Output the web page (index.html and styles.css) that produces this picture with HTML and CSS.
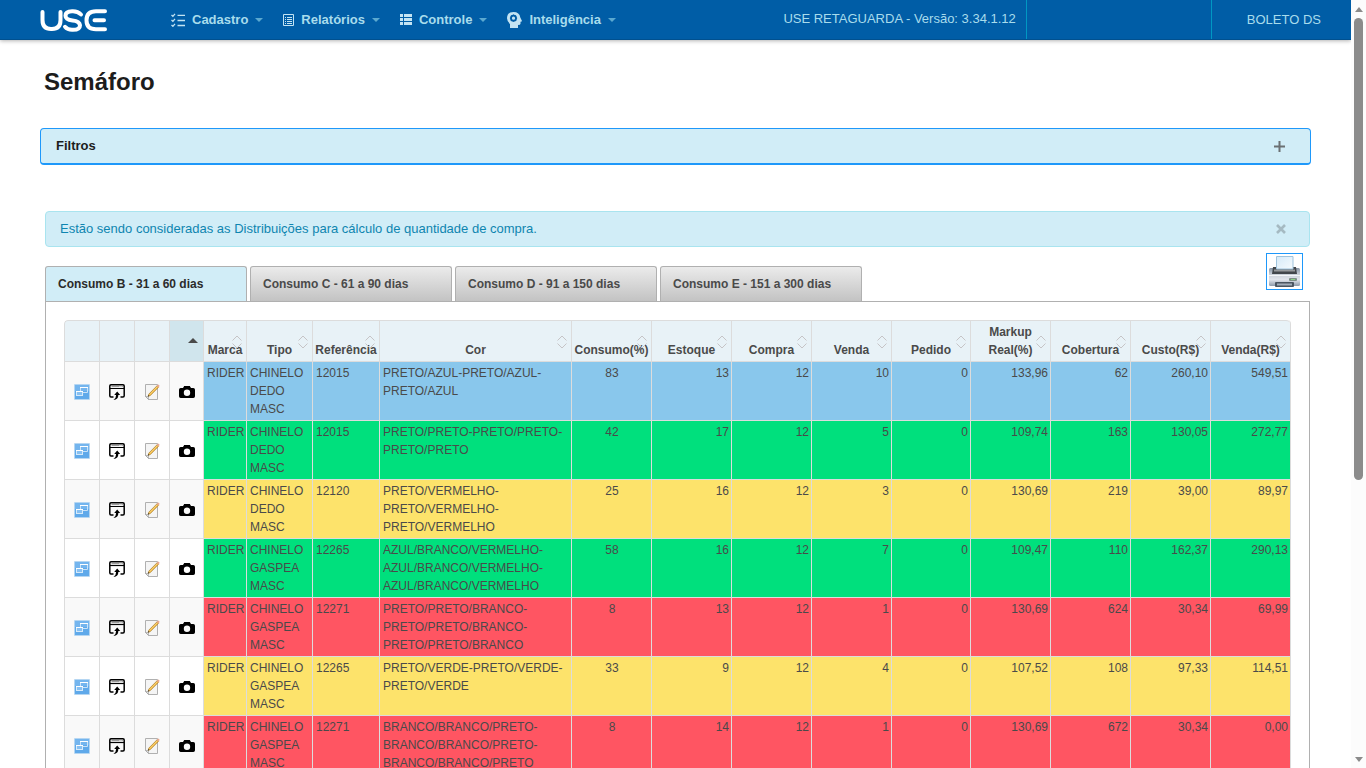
FILE: index.html
```
<!DOCTYPE html>
<html lang="pt-BR">
<head>
<meta charset="utf-8">
<title>Semáforo</title>
<link rel="stylesheet" href="styles.css">
</head>
<body>
<svg class="sprite" aria-hidden="true">
  <symbol id="i-windows" viewBox="0 0 16 16">
    <rect x="0" y="0" width="16" height="16" rx="1" fill="#b5d6f2"/>
    <rect x="1" y="1" width="14" height="14" fill="#5fa9ea"/>
    <rect x="1" y="1" width="14" height="6" fill="#74b5ee"/>
    <path d="M6.500 8V3.500h7v5H9" fill="none" stroke="#c9e2f8"/>
    <path d="M6 3.500h8" stroke="#fff"/>
    <rect x="2.500" y="7.500" width="6" height="4" fill="#86c0f2" stroke="#d6eafa"/>
    <path d="M2 7.500h7" stroke="#fff"/>
  </symbol>
  <symbol id="i-share" viewBox="0 0 16 16">
    <path d="M4.500 13H2q-1.200 0-1.200-1.200V2Q.8.800 2 .8h12q1.200 0 1.200 1.200v9.800q0 1.200-1.200 1.200h-2.500" fill="none" stroke="#000" stroke-width="1.500"/>
    <path d="M1 4.500h14" stroke="#000" stroke-width="1.200"/>
    <path d="M2.500 2.600h8M11.500 2.600h1M13.200 2.600h.8" stroke="#777" stroke-width=".8"/>
    <path d="M8.200 7.500l3 3.500H9.300q.2 4.300-4.800 5 2.700-1.800 2.600-5H5.200z" fill="#000"/>
  </symbol>
  <symbol id="i-edit" viewBox="0 0 16 16">
    <path d="M1.500.5h12v15h-9l-3-3z" fill="#f5f5f5" stroke="#b0b0b0"/>
    <path d="M1.500 12.500h3v3z" fill="#ddd" stroke="#999" stroke-width=".6"/>
    <path d="M4.200 12.300l.6-2.200 8.300-8.400 1.500 1.500-8.300 8.400z" fill="#f2b63a" stroke="#9c7327" stroke-width=".6"/>
    <path d="M5.600 10.700l7.800-8" stroke="#ffe9a8" stroke-width=".6"/>
    <path d="M12.700 2l1.300-1.400q1.300.1 1.600 1.500l-1.300 1.400z" fill="#eaa98f"/>
    <path d="M4 12.600l.5-1.500.9.900z" fill="#222"/>
  </symbol>
  <symbol id="i-camera" viewBox="0 0 16 12">
    <path fill-rule="evenodd" d="M5.200 0h5.600l1.200 2h2.300Q16 2 16 3.700v6.600Q16 12 14.300 12H1.700Q0 12 0 10.300V3.700Q0 2 1.700 2H4zM8 3.500a3.200 3.200 0 1 0 0 6.400 3.200 3.200 0 0 0 0-6.400z" fill="#000"/>
  </symbol>
  <symbol id="i-sort" viewBox="0 0 10 14">
    <path d="M.5 5.500L5 1l4.500 4.500M.5 8.500L5 13l4.500-4.500" fill="none" stroke="#c6c4c6"/>
  </symbol>
</svg>

<div class="shell">
  <div class="page">
    <header class="topbar">
      <a class="logo" href="#" aria-label="USE">
        <svg width="68" height="24" viewBox="0 0 68 24" fill="none" stroke="#fff" stroke-width="4" stroke-linecap="round" stroke-linejoin="round">
          <path d="M2.500 3v8q0 9 8.500 9h1q8.500 0 8.500-9V3"/>
          <path d="M41 5.500Q38 2.300 33 2.300h-1q-6.500 0-6.500 4.500 0 4 7 4.600t7.500 4.800q0 4.600-7 4.600h-1q-4.500 0-7-3"/>
          <path d="M65 2.300H56q-9.500 0-9.500 9t9.500 9h9M54.500 11.300H64"/>
        </svg>
      </a>
      <nav class="menu">
        <button class="menu-item" type="button"><svg width="14" height="14" viewBox="0 0 14 14" fill="none" stroke="currentColor" stroke-width="1.300"><path d="M.5 2l1.400 1.300L4 .8M.5 7l1.400 1.300L4 5.800M.5 12l1.400 1.300L4 10.800M6.500 2.300H14M6.500 7.500H14M6.500 12.500H14"/></svg>Cadastro<i class="caret"></i></button>
        <button class="menu-item" type="button"><svg width="11" height="12" viewBox="0 0 11 12" fill="none" stroke="currentColor"><path d="M.5.5h10v11H.5zM2 3.500h1M4 3.500h5M2 5.500h1M4 5.500h5M2 7.500h1M4 7.500h5M2 9.500h1M4 9.500h5"/></svg>Relatórios<i class="caret"></i></button>
        <button class="menu-item" type="button"><svg width="12" height="11" viewBox="0 0 12 11" fill="currentColor"><path d="M0 0h3v3H0zM4 0h8v3H4zM0 4h3v3H0zM4 4h8v3H4zM0 8h3v3H0zM4 8h8v3H4z"/></svg>Controle<i class="caret"></i></button>
        <button class="menu-item" type="button"><svg width="15" height="16" viewBox="0 0 15 16"><path d="M6.500 0Q12.500 0 13.300 5.500L15 9q0 .7-1.500.8v2q0 1.200-2.500 1.200V16H3v-4Q0 9.500 0 6.300 0 0 6.500 0z" fill="currentColor"/><circle cx="6.500" cy="6.200" r="2.500" fill="none" stroke="#005da6" stroke-width="1.800"/><path d="M6.500 2.600v1M6.500 8.800v1M2.900 6.200h1M9.100 6.200h1M4 3.700l.7.700M8.300 8l.7.700M9 3.700l-.7.700M4.700 8l-.7.700" stroke="#005da6" stroke-width="1.300"/></svg>Inteligência<i class="caret"></i></button>
      </nav>
      <span class="version">USE RETAGUARDA - Versão: 3.34.1.12</span>
      <span class="slot"></span>
      <a class="account" href="#">BOLETO DS</a>
    </header>

    <main class="content">
      <h1 class="title">Semáforo</h1>

      <button class="filters" type="button">Filtros
        <svg width="11" height="11" viewBox="0 0 11 11"><path d="M5.500 0v11M0 5.500h11" stroke="#6b7073" stroke-width="2"/></svg>
      </button>

      <div class="panel">
        <div class="alert">
          <span>Estão sendo consideradas as Distribuições para cálculo de quantidade de compra.</span>
          <button class="plain" type="button" aria-label="Fechar"><svg width="10" height="10" viewBox="0 0 10 10"><path d="M1 1l8 8M9 1L1 9" stroke="#a5bac2" stroke-width="2.600"/></svg></button>
        </div>

        <div class="tabbar">
          <div class="tabs" role="tablist">
            <button class="tab active" type="button" role="tab" aria-selected="true">Consumo B - 31 a 60 dias</button>
            <button class="tab" type="button" role="tab">Consumo C - 61 a 90 dias</button>
            <button class="tab" type="button" role="tab">Consumo D - 91 a 150 dias</button>
            <button class="tab" type="button" role="tab">Consumo E - 151 a 300 dias</button>
          </div>
          <button class="print" type="button" aria-label="Imprimir">
            <svg width="33" height="33" viewBox="0 0 33 33">
              <defs>
                <linearGradient id="body" x1="0" y1="0" x2="0" y2="1"><stop offset="0" stop-color="#8492a2"/><stop offset=".35" stop-color="#c9cfd8"/><stop offset=".65" stop-color="#e2e5ec"/><stop offset="1" stop-color="#8d99a8"/></linearGradient>
                <linearGradient id="sheet" x1="0" y1="0" x2="1" y2="1"><stop offset="0" stop-color="#d6eaf8"/><stop offset="1" stop-color="#f6fbfe"/></linearGradient>
              </defs>
              <rect x="1" y="13" width="31" height="18" rx="1.500" fill="url(#body)"/>
              <path d="M1 20.500h31" stroke="#f4f6f8"/>
              <path d="M5 12h23l1 7H4z" fill="#42464b"/>
              <path d="M6 15.500h21" stroke="#96999c" stroke-width="2"/>
              <path d="M8.500 1.500h16.500v12.500H8.500z" fill="url(#sheet)" stroke="#9fc3dc"/>
              <rect x="21" y="23" width="8" height="3" rx="1" fill="#7f9088"/>
              <rect x="23" y="24" width="4" height="1" fill="#8fd48a"/>
              <rect x="7" y="27" width="19" height="5" rx="1" fill="#4b5560"/>
              <path d="M9 29.500h15" stroke="#a4adb8" stroke-width="2"/>
            </svg>
          </button>
        </div>

        <div class="tab-body">
          <table class="grid">
            <colgroup>
              <col class="c-icon"><col class="c-icon"><col class="c-icon"><col class="c-cam"><col class="c-brand"><col class="c-type"><col class="c-ref"><col>
              <col class="c-num"><col class="c-num"><col class="c-num"><col class="c-num"><col class="c-order"><col class="c-num"><col class="c-num"><col class="c-num"><col class="c-num">
            </colgroup>
            <thead>
              <tr>
                <th></th><th></th><th></th>
                <th class="sorted"><i class="up"></i></th>
                <th>Marca<svg class="sort"><use href="#i-sort"/></svg></th>
                <th>Tipo<svg class="sort"><use href="#i-sort"/></svg></th>
                <th>Referência<svg class="sort"><use href="#i-sort"/></svg></th>
                <th>Cor<svg class="sort"><use href="#i-sort"/></svg></th>
                <th>Consumo(%)<svg class="sort"><use href="#i-sort"/></svg></th>
                <th>Estoque<svg class="sort"><use href="#i-sort"/></svg></th>
                <th>Compra<svg class="sort"><use href="#i-sort"/></svg></th>
                <th>Venda<svg class="sort"><use href="#i-sort"/></svg></th>
                <th>Pedido<svg class="sort"><use href="#i-sort"/></svg></th>
                <th>Markup Real(%)<svg class="sort"><use href="#i-sort"/></svg></th>
                <th>Cobertura<svg class="sort"><use href="#i-sort"/></svg></th>
                <th>Custo(R$)<svg class="sort"><use href="#i-sort"/></svg></th>
                <th>Venda(R$)<svg class="sort"><use href="#i-sort"/></svg></th>
              </tr>
            </thead>
            <tbody>
              <tr class="blue">
                <td class="act"><button type="button" aria-label="Detalhes"><svg><use href="#i-windows"/></svg></button></td>
                <td class="act"><button type="button" aria-label="Abrir"><svg><use href="#i-share"/></svg></button></td>
                <td class="act"><button type="button" aria-label="Editar"><svg><use href="#i-edit"/></svg></button></td>
                <td class="act"><button type="button" aria-label="Foto"><svg class="cam"><use href="#i-camera"/></svg></button></td>
                <td>RIDER</td><td>CHINELO DEDO MASC</td><td>12015</td><td>PRETO/AZUL-PRETO/AZUL-<wbr>PRETO/AZUL</td>
                <td class="mid">83</td><td class="num">13</td><td class="num">12</td><td class="num">10</td><td class="num">0</td><td class="num">133,96</td><td class="num">62</td><td class="num">260,10</td><td class="num">549,51</td>
              </tr>
              <tr class="green">
                <td class="act"><button type="button" aria-label="Detalhes"><svg><use href="#i-windows"/></svg></button></td>
                <td class="act"><button type="button" aria-label="Abrir"><svg><use href="#i-share"/></svg></button></td>
                <td class="act"><button type="button" aria-label="Editar"><svg><use href="#i-edit"/></svg></button></td>
                <td class="act"><button type="button" aria-label="Foto"><svg class="cam"><use href="#i-camera"/></svg></button></td>
                <td>RIDER</td><td>CHINELO DEDO MASC</td><td>12015</td><td>PRETO/PRETO-PRETO/PRETO-<wbr>PRETO/PRETO</td>
                <td class="mid">42</td><td class="num">17</td><td class="num">12</td><td class="num">5</td><td class="num">0</td><td class="num">109,74</td><td class="num">163</td><td class="num">130,05</td><td class="num">272,77</td>
              </tr>
              <tr class="yellow">
                <td class="act"><button type="button" aria-label="Detalhes"><svg><use href="#i-windows"/></svg></button></td>
                <td class="act"><button type="button" aria-label="Abrir"><svg><use href="#i-share"/></svg></button></td>
                <td class="act"><button type="button" aria-label="Editar"><svg><use href="#i-edit"/></svg></button></td>
                <td class="act"><button type="button" aria-label="Foto"><svg class="cam"><use href="#i-camera"/></svg></button></td>
                <td>RIDER</td><td>CHINELO DEDO MASC</td><td>12120</td><td>PRETO/VERMELHO-<wbr>PRETO/VERMELHO-<wbr>PRETO/VERMELHO</td>
                <td class="mid">25</td><td class="num">16</td><td class="num">12</td><td class="num">3</td><td class="num">0</td><td class="num">130,69</td><td class="num">219</td><td class="num">39,00</td><td class="num">89,97</td>
              </tr>
              <tr class="green">
                <td class="act"><button type="button" aria-label="Detalhes"><svg><use href="#i-windows"/></svg></button></td>
                <td class="act"><button type="button" aria-label="Abrir"><svg><use href="#i-share"/></svg></button></td>
                <td class="act"><button type="button" aria-label="Editar"><svg><use href="#i-edit"/></svg></button></td>
                <td class="act"><button type="button" aria-label="Foto"><svg class="cam"><use href="#i-camera"/></svg></button></td>
                <td>RIDER</td><td>CHINELO GASPEA MASC</td><td>12265</td><td>AZUL/BRANCO/VERMELHO-<wbr>AZUL/BRANCO/VERMELHO-<wbr>AZUL/BRANCO/VERMELHO</td>
                <td class="mid">58</td><td class="num">16</td><td class="num">12</td><td class="num">7</td><td class="num">0</td><td class="num">109,47</td><td class="num">110</td><td class="num">162,37</td><td class="num">290,13</td>
              </tr>
              <tr class="red">
                <td class="act"><button type="button" aria-label="Detalhes"><svg><use href="#i-windows"/></svg></button></td>
                <td class="act"><button type="button" aria-label="Abrir"><svg><use href="#i-share"/></svg></button></td>
                <td class="act"><button type="button" aria-label="Editar"><svg><use href="#i-edit"/></svg></button></td>
                <td class="act"><button type="button" aria-label="Foto"><svg class="cam"><use href="#i-camera"/></svg></button></td>
                <td>RIDER</td><td>CHINELO GASPEA MASC</td><td>12271</td><td>PRETO/PRETO/BRANCO-<wbr>PRETO/PRETO/BRANCO-<wbr>PRETO/PRETO/BRANCO</td>
                <td class="mid">8</td><td class="num">13</td><td class="num">12</td><td class="num">1</td><td class="num">0</td><td class="num">130,69</td><td class="num">624</td><td class="num">30,34</td><td class="num">69,99</td>
              </tr>
              <tr class="yellow">
                <td class="act"><button type="button" aria-label="Detalhes"><svg><use href="#i-windows"/></svg></button></td>
                <td class="act"><button type="button" aria-label="Abrir"><svg><use href="#i-share"/></svg></button></td>
                <td class="act"><button type="button" aria-label="Editar"><svg><use href="#i-edit"/></svg></button></td>
                <td class="act"><button type="button" aria-label="Foto"><svg class="cam"><use href="#i-camera"/></svg></button></td>
                <td>RIDER</td><td>CHINELO GASPEA MASC</td><td>12265</td><td>PRETO/VERDE-PRETO/VERDE-<wbr>PRETO/VERDE</td>
                <td class="mid">33</td><td class="num">9</td><td class="num">12</td><td class="num">4</td><td class="num">0</td><td class="num">107,52</td><td class="num">108</td><td class="num">97,33</td><td class="num">114,51</td>
              </tr>
              <tr class="red">
                <td class="act"><button type="button" aria-label="Detalhes"><svg><use href="#i-windows"/></svg></button></td>
                <td class="act"><button type="button" aria-label="Abrir"><svg><use href="#i-share"/></svg></button></td>
                <td class="act"><button type="button" aria-label="Editar"><svg><use href="#i-edit"/></svg></button></td>
                <td class="act"><button type="button" aria-label="Foto"><svg class="cam"><use href="#i-camera"/></svg></button></td>
                <td>RIDER</td><td>CHINELO GASPEA MASC</td><td>12271</td><td>BRANCO/BRANCO/PRETO-<wbr>BRANCO/BRANCO/PRETO-<wbr>BRANCO/BRANCO/PRETO</td>
                <td class="mid">8</td><td class="num">14</td><td class="num">12</td><td class="num">1</td><td class="num">0</td><td class="num">130,69</td><td class="num">672</td><td class="num">30,34</td><td class="num">0,00</td>
              </tr>
            </tbody>
          </table>
        </div>
      </div>
    </main>
  </div>

  <div class="scroll" aria-hidden="true">
    <i class="arrow-up"></i>
    <div class="track"><div class="thumb"></div></div>
    <i class="arrow-down"></i>
  </div>
</div>
</body>
</html>
```

FILE: styles.css
```
* { box-sizing: border-box; }

body {
  margin: 0;
  background: #fff;
  color: #4a4a4a;
  font: 13px/18px "Liberation Sans", Arial, sans-serif;
}

button {
  font: inherit;
  color: inherit;
  cursor: pointer;
}

svg { display: block; flex: none; }

.sprite { position: absolute; width: 0; height: 0; }

.shell { display: flex; height: 100vh; }

.page {
  flex: 1;
  min-width: 0;
  overflow-y: auto;
  scrollbar-width: none;
}

/* Top bar */
.topbar {
  display: flex;
  align-items: stretch;
  height: 40px;
  padding-left: 40px;
  background: #005da6;
  border-bottom: 1px solid #00508f;
  box-shadow: 0 1px 4px rgba(0, 0, 0, .3);
  color: #a8dcec;
}

.logo { display: flex; align-items: center; padding-top: 3px; }

.menu { display: flex; gap: 20px; flex: 1; margin-left: 63px; }

.menu-item {
  display: flex;
  align-items: center;
  gap: 7px;
  padding: 0;
  border: 0;
  background: none;
  font-weight: bold;
  white-space: nowrap;
}

.menu-item svg { color: #c3e4f3; }

.caret {
  border: 4px solid transparent;
  border-top-color: #5ba9d0;
  border-bottom: 0;
}

.version {
  padding: 10px 10px 0;
  border-right: 1px solid #0098c3;
  white-space: nowrap;
}

.slot { width: 185px; border-right: 1px solid #0098c3; }

.account {
  padding: 11px 30px 0 35px;
  color: inherit;
  text-decoration: none;
  white-space: nowrap;
}

/* Page content */
.content { padding: 26px 40px 0; }

.title {
  margin: 0;
  padding-left: 4px;
  color: #1c1c1c;
  font-size: 24px;
  line-height: 32px;
}

.filters {
  display: flex;
  justify-content: space-between;
  align-items: center;
  width: 100%;
  height: 37px;
  margin: 30px 0 46px;
  padding: 0 25px 0 15px;
  border: 1px solid #1e98fa;
  border-bottom-width: 2px;
  border-radius: 4px;
  background: #d1edf7;
  color: #1c1c1c;
  font-weight: bold;
}

.panel { padding: 0 1px 0 5px; }

.alert {
  display: flex;
  justify-content: space-between;
  align-items: center;
  height: 36px;
  padding: 0 23px 0 14px;
  border: 1px solid #a9e4ef;
  border-radius: 4px;
  background: #d1edf7;
  color: #0e85b0;
}

.plain { padding: 0; border: 0; background: none; }

.tabbar {
  display: flex;
  justify-content: space-between;
  align-items: flex-start;
  height: 48px;
  padding: 6px 7px 0 0;
}

.tabs { display: flex; gap: 3px; padding-top: 13px; }

.tab {
  width: 202px;
  height: 35px;
  padding: 0 12px;
  border: 1px solid #b0b0b0;
  border-bottom: 0;
  border-radius: 3px 3px 0 0;
  background: linear-gradient(#ebebeb, #c3c3c3);
  font-size: 12px;
  font-weight: bold;
  text-align: left;
  white-space: nowrap;
}

.tab.active { background: #d1edf7; color: #2b2b2b; }

.print {
  padding: 1px;
  border: 1px solid #1e98fa;
  background: #fff;
}

.tab-body {
  margin-top: 6px;
  padding: 18px;
  border: 1px solid #b0b0b0;
}

/* Data table */
.grid {
  width: 100%;
  table-layout: fixed;
  border-collapse: separate;
  border-spacing: 0;
  border-right: 1px solid #dcdcdc;
  border-radius: 4px;
  overflow: hidden;
  font-size: 12px;
}

.c-icon { width: 35px; }
.c-cam { width: 34px; }
.c-brand { width: 43px; }
.c-type { width: 66px; }
.c-ref { width: 67px; }
.c-num { width: 80px; }
.c-order { width: 79px; }

.grid th,
.grid td {
  padding: 2px;
  border: solid #dcdcdc;
  border-width: 1px 0 0 1px;
  vertical-align: top;
  text-align: left;
}

.grid td { padding-left: 3px; }

.grid th {
  position: relative;
  background: #e8f2f7;
  text-align: center;
  vertical-align: bottom;
}

.grid th:first-child { border-top-left-radius: 4px; }
.grid th:last-child { border-top-right-radius: 4px; }
.grid th.sorted { background: #d0e5ed; }

.sort {
  position: absolute;
  top: 14px;
  right: 4px;
  width: 10px;
  height: 14px;
}

.up {
  position: absolute;
  top: 17px;
  right: 5px;
  border: 5px solid transparent;
  border-top: 0;
  border-bottom-color: #4a4a4a;
}

.grid .num { text-align: right; }
.grid .mid { text-align: center; }
.grid .act { padding-left: 2px; vertical-align: middle; }

.act button {
  display: block;
  margin: 0 auto;
  padding: 2px 0 0;
  border: 0;
  background: none;
}

.act svg { width: 16px; height: 16px; }
.act .cam { height: 12px; }

.blue td { background: #89c7ec; }
.green td { background: #00e07d; }
.yellow td { background: #fde36b; }
.red td { background: #ff5562; }
.grid .act { background: #fff; }
.grid tr:nth-child(odd) .act { background: #f9f9f9; }

/* Scroll indicator */
.scroll {
  display: flex;
  flex-direction: column;
  align-items: center;
  justify-content: space-between;
  width: 15px;
  padding: 7px 0 6px;
  background: #fcfcfc;
}

.track { flex: 1; padding: 6px 0; }

.thumb {
  width: 9px;
  height: 63%;
  border-radius: 5px;
  background: #8b8b8b;
}

.arrow-up,
.arrow-down { border: 4px solid transparent; }
.arrow-up { border-top: 0; border-bottom: 5px solid #8b8b8b; }
.arrow-down { border-bottom: 0; border-top: 5px solid #8b8b8b; }
```
